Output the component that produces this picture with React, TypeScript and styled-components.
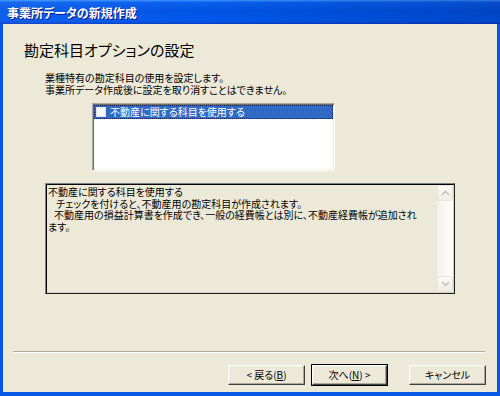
import React from "react";
import styled, { createGlobalStyle } from "styled-components";

const GlobalStyle = createGlobalStyle`
  html, body { margin: 0; padding: 0; background: #ECE9D8; }
  body {
    font-family: "Noto Sans CJK JP", "Noto Sans", sans-serif;
    font-feature-settings: "palt";
    overflow: hidden;
    color: #000;
  }
`;

const Window = styled.div`
  width: 500px;
  height: 396px;
  display: flex;
  flex-direction: column;
`;

const TitleBar = styled.div`
  height: 24px;
  flex: none;
  display: flex;
  align-items: center;
  padding-left: 7px;
  background:
    linear-gradient(90deg, rgba(255,255,255,0.06) 0%, rgba(0,0,0,0) 40%, rgba(0,10,80,0.22) 100%),
    linear-gradient(180deg, #3d95ff 0%, #0a5fee 10%, #0054e3 45%, #0058ee 85%, #0a4fd8 93%, #0339c9 100%);
`;

const TitleText = styled.span`
  color: #fff;
  font-weight: bold;
  font-size: 12px;
  line-height: 14px;
  margin-top: 1px;
  text-shadow: 1px 1px 0 #0a1883;
`;

const Frame = styled.div`
  flex: 1;
  display: flex;
  flex-direction: column;
  border-style: solid;
  border-color: #0a57e6;
  border-width: 0 3px 4px 3px;
  background: #ece9d8;
`;

const Heading = styled.div`
  margin: 16px 0 0 21px;
  font-size: 15px;
  line-height: 20px;
  height: 20px;
`;

const Intro = styled.div`
  margin: 12px 0 0 42px;
  font-size: 10px;
  line-height: 12px;
  height: 24px;
  white-space: nowrap;
`;

const ListBox = styled.div`
  margin: 7px 0 0 89px;
  width: 243px;
  height: 68px;
  box-sizing: border-box;
  background: #fff;
  border: 1px solid;
  border-color: #aca899 #fff #fff #aca899;
  box-shadow: inset 1px 1px 0 #716f64, inset -1px -1px 0 #f1efe2;
  padding: 1px;
`;

const ListRow = styled.div<{ $selected?: boolean }>`
  height: 14px;
  box-sizing: border-box;
  display: flex;
  align-items: center;
  background: ${(p) => (p.$selected ? "#316ac5" : "transparent")};
  border: 1px dotted ${(p) => (p.$selected ? "#17205e" : "transparent")};
  color: ${(p) => (p.$selected ? "#fff" : "#000")};
  font-size: 10px;
  line-height: 12px;
  white-space: nowrap;
`;

const CheckBox = styled.span`
  width: 10px;
  height: 10px;
  box-sizing: border-box;
  margin-left: 1px;
  background: #fff;
  border: 1px solid #e2e2dc;
  flex: none;
`;

const RowText = styled.span`
  margin-left: 4px;
`;

const DescBox = styled.div`
  margin: 12px 0 0 42px;
  width: 410px;
  height: 111px;
  box-sizing: border-box;
  display: flex;
  border: 1px solid;
  border-color: #808080 #202020 #202020 #808080;
  box-shadow: inset 1px 1px 0 #000, inset -1px -1px 0 #d4d0c8;
  padding: 1px;
  background: #ece9d8;
`;

const DescText = styled.div`
  flex: 1;
  padding: 1px 0 0 1px;
  font-size: 10px;
  line-height: 11.5px;
  overflow: hidden;
`;

const DescLine = styled.div<{ $indent?: number }>`
  padding-left: ${(p) => p.$indent ?? 0}px;
  white-space: nowrap;
`;

const ScrollBar = styled.div`
  width: 16px;
  flex: none;
  display: flex;
  flex-direction: column;
  background: linear-gradient(90deg, #f3f1ec 0%, #fefefb 100%);
`;

const ScrollButton = styled.div`
  width: 16px;
  height: 16px;
  box-sizing: border-box;
  display: flex;
  align-items: center;
  justify-content: center;
  border: 1px solid #e8e6dc;
  border-radius: 2px;
  background: linear-gradient(180deg, #fbfbf8 0%, #eeede5 100%);
`;

const Track = styled.div`
  flex: 1;
`;

const Separator = styled.div`
  margin: 57px 12px 0 10px;
  height: 1px;
  background: #aca899;
  border-bottom: 1px solid #fff;
`;

const ButtonRow = styled.div`
  margin: 12px 11px 0 0;
  display: flex;
  justify-content: flex-end;
`;

const Button = styled.button<{ $width: number; $gap?: number; $default?: boolean }>`
  width: ${(p) => p.$width}px;
  height: 20px;
  margin-left: ${(p) => p.$gap ?? 0}px;
  padding: 0;
  box-sizing: border-box;
  font-family: inherit;
  font-feature-settings: "palt";
  font-size: 10px;
  line-height: 12px;
  color: #000;
  background: #ece9d8;
  border: 1px solid;
  border-color: #fff #404040 #404040 #fff;
  box-shadow: ${(p) =>
    p.$default
      ? "0 0 0 1px #000, inset -1px -1px 0 #aca899, inset 1px 1px 0 #f1efe2"
      : "inset -1px -1px 0 #aca899, inset 1px 1px 0 #f1efe2"};
  display: flex;
  align-items: center;
  justify-content: center;
  white-space: nowrap;
`;

const Key = styled.span`
  text-decoration: underline;
`;

const Chevron = ({ up }: { up?: boolean }) => (
  <svg width="9" height="6" viewBox="0 0 9 6">
    <polyline
      points={up ? "1,5 4.5,1.5 8,5" : "1,1 4.5,4.5 8,1"}
      fill="none"
      stroke="#c4c3b8"
      strokeWidth="1.6"
    />
  </svg>
);

export default function App() {
  return (
    <>
      <GlobalStyle />
      <Window>
        <TitleBar>
          <TitleText>事業所データの新規作成</TitleText>
        </TitleBar>
        <Frame>
          <Heading>勘定科目オプションの設定</Heading>
          <Intro>
            業種特有の勘定科目の使用を設定します。
            <br />
            事業所データ作成後に設定を取り消すことはできません。
          </Intro>
          <ListBox>
            <ListRow $selected>
              <CheckBox />
              <RowText>不動産に関する科目を使用する</RowText>
            </ListRow>
          </ListBox>
          <DescBox>
            <DescText>
              <DescLine>不動産に関する科目を使用する</DescLine>
              <DescLine $indent={8}>チェックを付けると、不動産用の勘定科目が作成されます。</DescLine>
              <DescLine $indent={6}>不動産用の損益計算書を作成でき、一般の経費帳とは別に、不動産経費帳が追加され</DescLine>
              <DescLine>ます。</DescLine>
            </DescText>
            <ScrollBar>
              <ScrollButton>
                <Chevron up />
              </ScrollButton>
              <Track />
              <ScrollButton>
                <Chevron />
              </ScrollButton>
            </ScrollBar>
          </DescBox>
          <Separator />
          <ButtonRow>
            <Button $width={77}>
              &lt; 戻る(<Key>B</Key>)
            </Button>
            <Button $width={75} $gap={7} $default>
              次へ(<Key>N</Key>) &gt;
            </Button>
            <Button $width={77} $gap={22}>
              キャンセル
            </Button>
          </ButtonRow>
        </Frame>
      </Window>
    </>
  );
}
